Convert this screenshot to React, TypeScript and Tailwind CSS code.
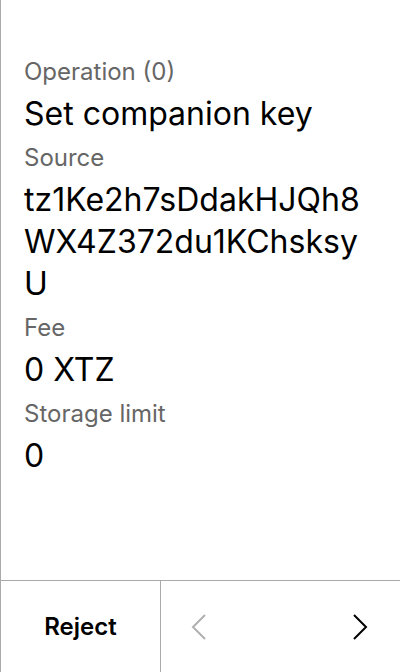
import React from 'react';

const Field: React.FC<{ label: string; value: string }> = ({ label, value }) => (
  <div>
    <div className="text-[24px] leading-[30px] text-[#666666]">{label}</div>
    <div className="mt-[6px] text-[32px] leading-[42px] text-black break-all">{value}</div>
  </div>
);

const App: React.FC = () => {
  return (
    <div
      className="w-[400px] h-[672px] flex flex-col bg-white border-l border-[#aaaaaa]"
      style={{ fontFamily: 'Inter, "Noto Sans", sans-serif' }}
    >
      <div className="flex-1 pt-[57px] pl-[23px] pr-[24px] flex flex-col gap-[8px]">
        <Field label="Operation (0)" value="Set companion key" />
        <Field label="Source" value="tz1Ke2h7sDdakHJQh8WX4Z372du1KChsksyU" />
        <Field label="Fee" value="0 XTZ" />
        <Field label="Storage limit" value="0" />
      </div>
      <div className="h-[92px] flex border-t border-[#aaaaaa]">
        <button className="w-[160px] flex items-center justify-center border-r border-[#aaaaaa] text-[24px] font-semibold text-black">
          Reject
        </button>
        <div className="flex-1 flex items-center justify-between pl-[30px] pr-[32px]">
          <svg width="16" height="28" viewBox="0 0 16 28" fill="none" stroke="#b0b0b0" strokeWidth="2">
            <path d="M14 2 L2 14 L14 26" />
          </svg>
          <svg width="16" height="28" viewBox="0 0 16 28" fill="none" stroke="#000" strokeWidth="2">
            <path d="M2 2 L14 14 L2 26" />
          </svg>
        </div>
      </div>
    </div>
  );
};

export default App;
